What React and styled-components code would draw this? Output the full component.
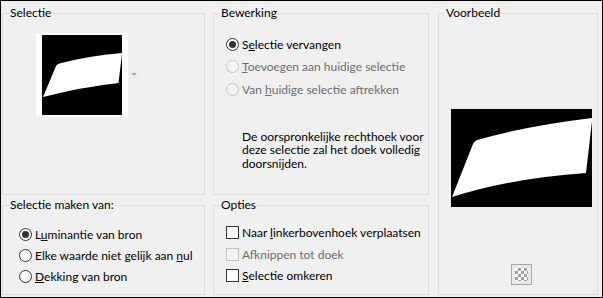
import React from "react";
import styled, { createGlobalStyle } from "styled-components";

const Global = createGlobalStyle`
  html, body { margin: 0; padding: 0; background: #f0f0f0; }
  body { font-family: Lato, "Noto Sans", sans-serif; font-size: 12px; color: #000; }
`;

const Window = styled.div`
  box-sizing: border-box;
  width: 603px;
  height: 298px;
  border: 1px solid #000;
  background: #f0f0f0;
`;

const Layout = styled.div`
  display: grid;
  grid-template-columns: 203px 8px 216px 9px 160px;
  grid-template-rows: 182px 10px 90px;
  padding: 12px 0 0 1px;
`;

const Group = styled.div`
  position: relative;
  box-sizing: border-box;
  border: 1px solid #dcdcdc;
  grid-column: ${(p) => p.$col};
  grid-row: ${(p) => p.$row};
  display: flex;
  flex-direction: column;
  padding: ${(p) => p.$pad || "0"};
`;

const Title = styled.span`
  position: absolute;
  top: -9px;
  left: 6px;
  padding: 0 1px;
  line-height: 16px;
  background: #f0f0f0;
  white-space: nowrap;
`;

const ThumbRow = styled.div`
  display: flex;
  align-items: center;
  gap: 3px;
`;

const ThumbFrame = styled.div`
  background: #fff;
  padding: 2px 6px;
  line-height: 0;
`;

const Row = styled.label`
  display: flex;
  align-items: center;
  height: ${(p) => p.$h}px;
  gap: 3px;
  white-space: nowrap;
  color: ${(p) => (p.$disabled ? "#6d6d6d" : "#000")};
`;

const RadioCircle = styled.span`
  box-sizing: border-box;
  width: 13px;
  height: 13px;
  flex: none;
  border-radius: 50%;
  border: 1px solid ${(p) => (p.$disabled ? "#c4c4c4" : "#333")};
  background: ${(p) => (p.$disabled ? "#f4f4f4" : "#fff")};
  display: flex;
  align-items: center;
  justify-content: center;
`;

const RadioDot = styled.span`
  width: 7px;
  height: 7px;
  border-radius: 50%;
  background: #333;
`;

const CheckSquare = styled.span`
  box-sizing: border-box;
  width: 13px;
  height: 13px;
  flex: none;
  border: 1px solid ${(p) => (p.$disabled ? "#c4c4c4" : "#333")};
  background: ${(p) => (p.$disabled ? "#f4f4f4" : "#fff")};
`;

const Description = styled.div`
  margin: 29px 0 0 16px;
  display: flex;
  flex-direction: column;
  white-space: nowrap;
`;

const DescLine = styled.span`
  height: 13.5px;
  line-height: 13.5px;
`;

const PreviewBox = styled.div`
  margin: 95px 0 0 12px;
  line-height: 0;
`;

const CheckerButton = styled.span`
  box-sizing: border-box;
  margin: auto 0 9px 72px;
  width: 21px;
  height: 21px;
  border: 1px solid #a9a9a9;
  background: #e9e9e9;
  padding: 3px;
  display: flex;
`;

const Checker = styled.span`
  flex: 1;
  background: repeating-conic-gradient(#a0a0a0 0% 25%, #ffffff 0% 50%) 0 0 / 6px 6px;
`;

const Mn = styled.u`
  text-decoration: underline;
`;

function Radio({ checked, disabled, h, children }) {
  return (
    <Row $h={h} $disabled={disabled}>
      <RadioCircle $disabled={disabled}>{checked && <RadioDot />}</RadioCircle>
      <span>{children}</span>
    </Row>
  );
}

function Check({ disabled, h, children }) {
  return (
    <Row $h={h} $disabled={disabled}>
      <CheckSquare $disabled={disabled} />
      <span>{children}</span>
    </Row>
  );
}

function DropArrow() {
  return (
    <svg width="6" height="4" viewBox="0 0 6 4">
      <path d="M0,0 L6,0 L3,3 Z" fill="#a8a8a8" />
    </svg>
  );
}

function Thumb() {
  return (
    <svg width="80" height="80" viewBox="0 0 80 80">
      <rect width="80" height="80" fill="#000" />
      <path d="M1,62 L14,31 Q15,29 17.5,28.5 Q45,21 80,18 L80,19 L76.5,48 Q40,52 1,62 Z" fill="#fff" />
    </svg>
  );
}

function Preview() {
  return (
    <svg width="141" height="98" viewBox="0 0 141 98">
      <rect width="141" height="98" fill="#000" />
      <path d="M1,88 L22,35 Q24,31 28,30.5 Q75,17 141,9 L141,12 L135,64 Q62,69 1,88 Z" fill="#fff" />
    </svg>
  );
}

export default function App() {
  return (
    <Window>
      <Global />
      <Layout>
        <Group $col="1" $row="1" $pad="19px 0 0 33px">
          <Title>Selectie</Title>
          <ThumbRow>
            <ThumbFrame>
              <Thumb />
            </ThumbFrame>
            <DropArrow />
          </ThumbRow>
        </Group>

        <Group $col="3" $row="1" $pad="19px 0 0 12px">
          <Title>Bewerking</Title>
          <Radio h={22.5} checked>
            S<Mn>e</Mn>lectie vervangen
          </Radio>
          <Radio h={22.5} disabled>
            <Mn>T</Mn>oevoegen aan huidige selectie
          </Radio>
          <Radio h={22.5} disabled>
            Van <Mn>h</Mn>uidige selectie aftrekken
          </Radio>
          <Description>
            <DescLine>De oorspronkelijke rechthoek voor</DescLine>
            <DescLine>deze selectie zal het doek volledig</DescLine>
            <DescLine>doorsnijden.</DescLine>
          </Description>
        </Group>

        <Group $col="5" $row="1 / 4">
          <Title>Voorbeeld</Title>
          <PreviewBox>
            <Preview />
          </PreviewBox>
          <CheckerButton>
            <Checker />
          </CheckerButton>
        </Group>

        <Group $col="1" $row="3" $pad="17.5px 0 0 16px">
          <Title>Selectie maken van:</Title>
          <Radio h={21} checked>
            L<Mn>u</Mn>minantie van bron
          </Radio>
          <Radio h={21}>
            Elke waarde niet gelijk aan <Mn>n</Mn>ul
          </Radio>
          <Radio h={21}>
            <Mn>D</Mn>ekking van bron
          </Radio>
        </Group>

        <Group $col="3" $row="3" $pad="16px 0 0 12px">
          <Title>Opties</Title>
          <Check h={21.5}>
            Naar <Mn>l</Mn>inkerbovenhoek verplaatsen
          </Check>
          <Check h={21.5} disabled>
            Af<Mn>k</Mn>nippen tot doek
          </Check>
          <Check h={21.5}>
            <Mn>S</Mn>electie omkeren
          </Check>
        </Group>
      </Layout>
    </Window>
  );
}
